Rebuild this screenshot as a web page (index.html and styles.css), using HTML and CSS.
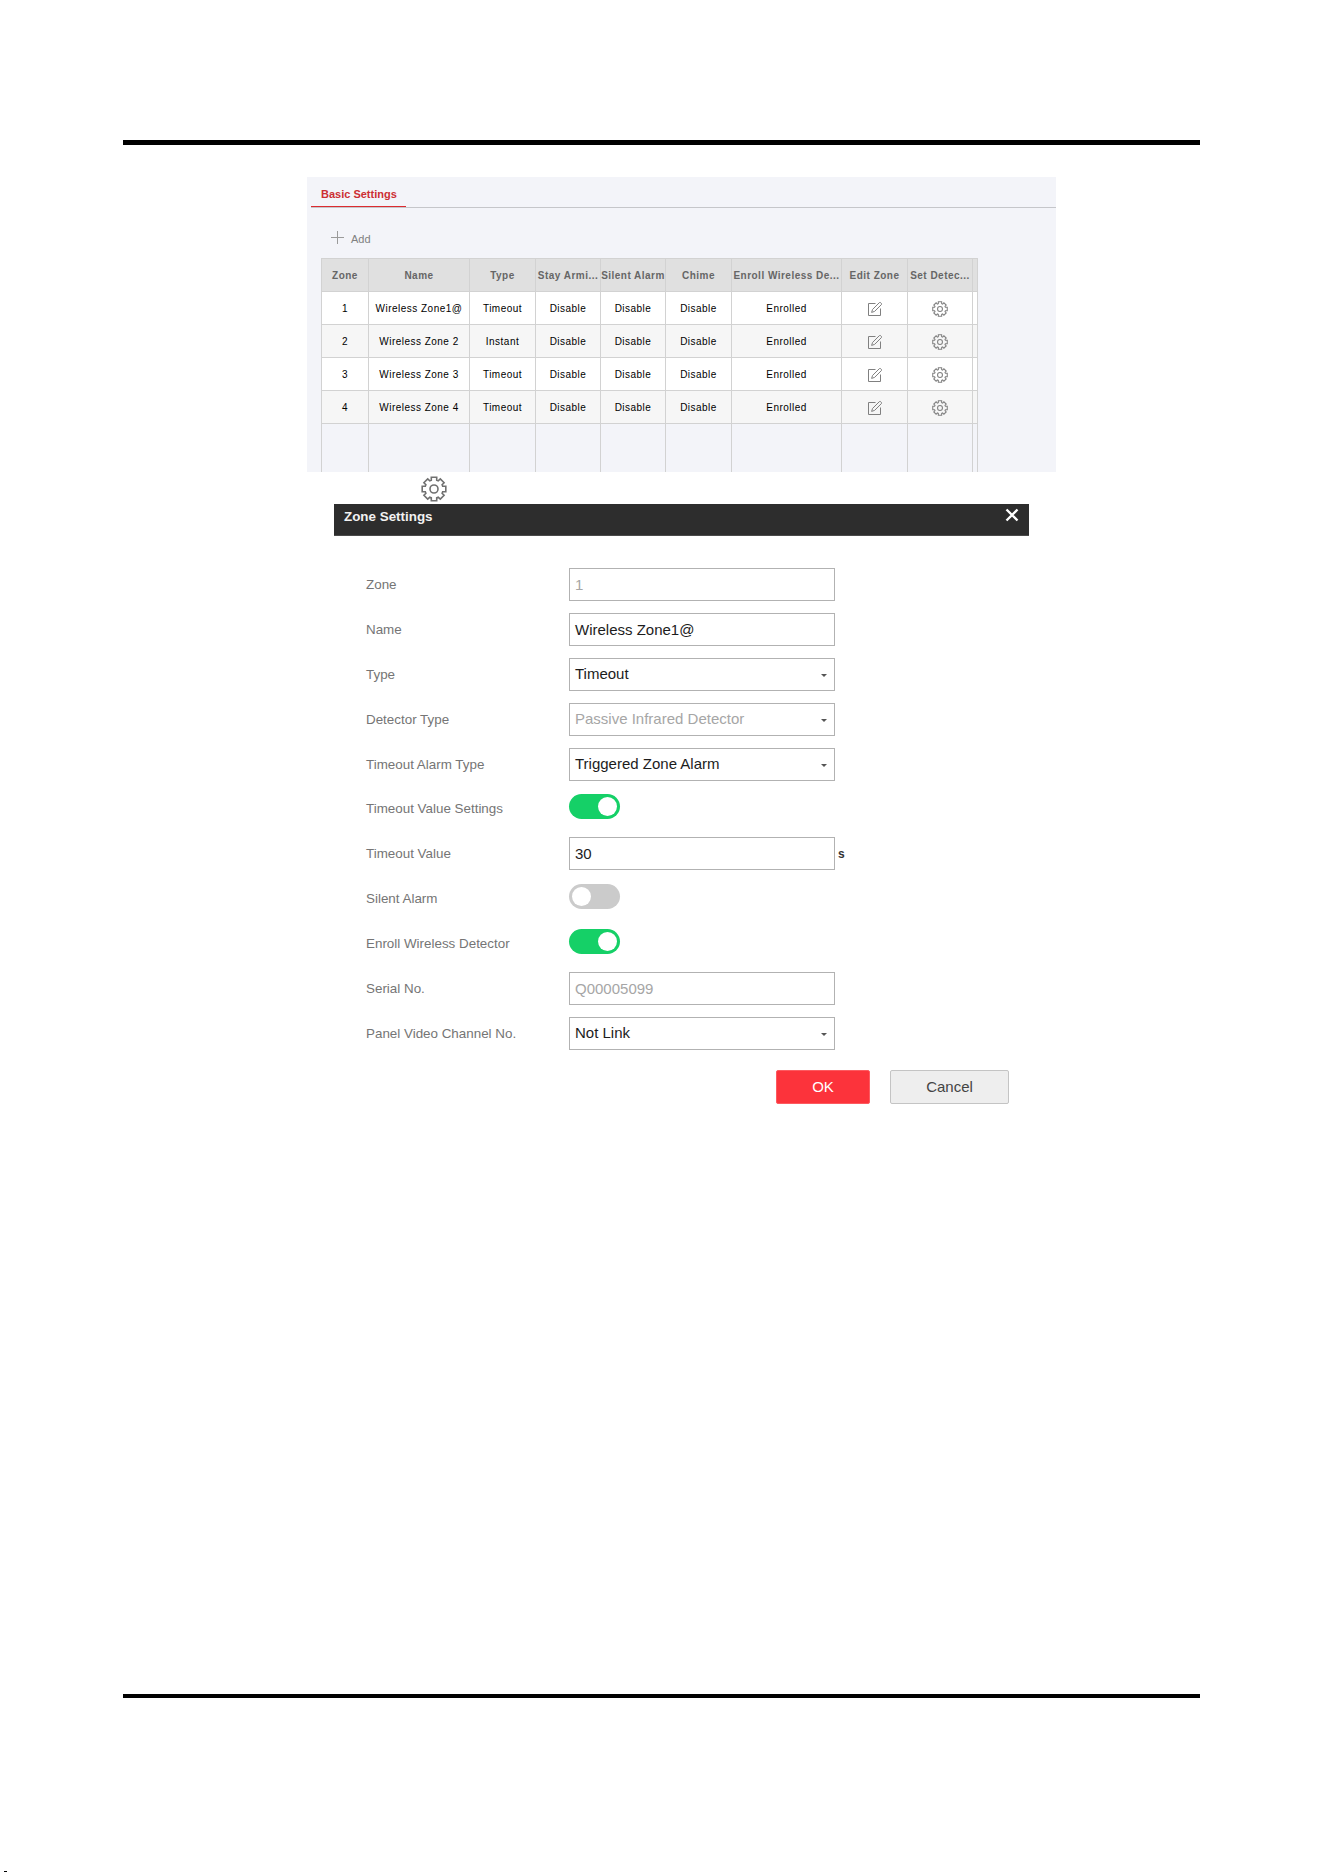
FILE: index.html
```html
<!DOCTYPE html>
<html lang="en">
<head>
  <title>Zone Settings</title>
  <meta charset="UTF-8">
  <meta name="viewport" content="width=device-width, initial-scale=1.0">
  <link rel="stylesheet" href="styles.css">
</head>
<body>
  <svg class="sprite" aria-hidden="true">
    <symbol id="gear" viewBox="0 0 26 26">
      <path d="M10.3 4.3 V1.2 H15.7 V4.3 L17.2 4.9 L19.3 2.9 L23.1 6.7 L21.1 8.8 L21.7 10.3 H24.8 V15.7 H21.7 L21.1 17.2 L23.1 19.3 L19.3 23.1 L17.2 21.1 L15.7 21.7 V24.8 H10.3 V21.7 L8.8 21.1 L6.7 23.1 L2.9 19.3 L4.9 17.2 L4.3 15.7 H1.2 V10.3 H4.3 L4.9 8.8 L2.9 6.7 L6.7 2.9 L8.8 4.9 Z"/>
      <circle cx="13" cy="13" r="4"/>
    </symbol>
    <symbol id="edit" viewBox="0 0 16 16">
      <path d="M8.5 2.5 H1.5 V14.5 H13.5 V7.5"/>
      <path d="M4.6 11.4 L5.6 8.4 L12.4 1.6 Q13 1 13.8 1.8 L14.4 2.4 Q15 3 14.4 3.6 L7.6 10.4 Z"/>
    </symbol>
  </svg>
  <div class="page">
    <div class="panel">
      <div class="tabs">
        <div class="tab active">Basic Settings</div>
      </div>
      <div class="toolbar">
        <svg class="plus" viewBox="0 0 13 13"><path d="M6.5 0 V13 M0 6.5 H13"/></svg>
        <span>Add</span>
      </div>
      <table class="zones">
        <colgroup>
          <col class="c-zone"><col class="c-name"><col class="c-type"><col class="c-stay"><col class="c-silent"><col class="c-chime"><col class="c-enroll"><col class="c-edit"><col class="c-detector"><col class="c-end">
        </colgroup>
        <thead>
          <tr><th>Zone</th><th>Name</th><th>Type</th><th>Stay Armi...</th><th>Silent Alarm</th><th>Chime</th><th>Enroll Wireless De...</th><th>Edit Zone</th><th>Set Detec...</th><th></th></tr>
        </thead>
        <tbody>
          <tr><td>1</td><td>Wireless Zone1@</td><td>Timeout</td><td>Disable</td><td>Disable</td><td>Disable</td><td>Enrolled</td><td><svg class="icon"><use href="#edit"/></svg></td><td><svg class="icon gear-sm"><use href="#gear"/></svg></td><td></td></tr>
          <tr><td>2</td><td>Wireless Zone 2</td><td>Instant</td><td>Disable</td><td>Disable</td><td>Disable</td><td>Enrolled</td><td><svg class="icon"><use href="#edit"/></svg></td><td><svg class="icon gear-sm"><use href="#gear"/></svg></td><td></td></tr>
          <tr><td>3</td><td>Wireless Zone 3</td><td>Timeout</td><td>Disable</td><td>Disable</td><td>Disable</td><td>Enrolled</td><td><svg class="icon"><use href="#edit"/></svg></td><td><svg class="icon gear-sm"><use href="#gear"/></svg></td><td></td></tr>
          <tr><td>4</td><td>Wireless Zone 4</td><td>Timeout</td><td>Disable</td><td>Disable</td><td>Disable</td><td>Enrolled</td><td><svg class="icon"><use href="#edit"/></svg></td><td><svg class="icon gear-sm"><use href="#gear"/></svg></td><td></td></tr>
          <tr class="empty"><td></td><td></td><td></td><td></td><td></td><td></td><td></td><td></td><td></td><td></td></tr>
        </tbody>
      </table>
    </div>

    <svg class="gear-lg"><use href="#gear"/></svg>

    <div class="dialog">
      <div class="dialog-header">
        <span>Zone Settings</span>
        <svg class="close" viewBox="0 0 14 14"><path d="M1.5 1.5 L12.5 12.5 M12.5 1.5 L1.5 12.5"/></svg>
      </div>
      <div class="form">
        <div class="row"><label>Zone</label><div class="field disabled">1</div></div>
        <div class="row"><label>Name</label><div class="field">Wireless Zone1@</div></div>
        <div class="row"><label>Type</label><div class="field select">Timeout</div></div>
        <div class="row"><label>Detector Type</label><div class="field select disabled">Passive Infrared Detector</div></div>
        <div class="row"><label>Timeout Alarm Type</label><div class="field select">Triggered Zone Alarm</div></div>
        <div class="row short"><label>Timeout Value Settings</label><div class="toggle on"></div></div>
        <div class="row"><label>Timeout Value</label><div class="field">30</div><span class="unit">s</span></div>
        <div class="row"><label>Silent Alarm</label><div class="toggle"></div></div>
        <div class="row"><label>Enroll Wireless Detector</label><div class="toggle on"></div></div>
        <div class="row"><label>Serial No.</label><div class="field disabled">Q00005099</div></div>
        <div class="row"><label>Panel Video Channel No.</label><div class="field select">Not Link</div></div>
      </div>
      <div class="buttons">
        <button class="btn ok">OK</button>
        <button class="btn cancel">Cancel</button>
      </div>
    </div>
  </div>
  <div class="page-mark"></div>
</body>
</html>
```
FILE: styles.css
```css
* {
  box-sizing: border-box;
}
body {
  margin: 0;
  padding-top: 140px;
  height: 1872px;
  overflow: hidden;
  display: flex;
  flex-direction: column;
  background: #fff;
  font-family: "Liberation Sans", Arial, sans-serif;
}
.sprite {
  position: absolute;
  width: 0;
  height: 0;
}
.page {
  width: 1077px;
  height: 1558px;
  margin-left: 123px;
  padding: 32px 0 0 184px;
  border-top: 5px solid #000;
  border-bottom: 4px solid #000;
}
.page-mark {
  width: 3px;
  height: 1px;
  margin: auto 0 0 4px;
  background: #000;
}

/* zone list */
.panel {
  width: 749px;
  height: 295px;
  background: #f3f4f9;
  overflow: hidden;
}
.tabs {
  height: 31px;
  margin-left: 4px;
  border-bottom: 1px solid #c5c6ca;
  display: flex;
}
.tab {
  width: 95px;
  padding: 11px 0 0 10px;
  font-size: 11px;
  line-height: 13px;
  font-weight: bold;
  white-space: nowrap;
}
.tab.active {
  color: #cc2e33;
  border-bottom: 1px solid #dc2b30;
}
.toolbar {
  height: 50px;
  padding: 23px 0 0 24px;
  display: flex;
  align-items: flex-start;
  gap: 7px;
  font-size: 11px;
  line-height: 17px;
  color: #808080;
}
.plus {
  width: 13px;
  height: 13px;
  stroke: #9a9a9a;
}
.zones {
  width: 657px;
  margin-left: 14px;
  table-layout: fixed;
  border-collapse: separate;
  border-spacing: 0;
  border-left: 1px solid #d2d2d2;
  border-top: 1px solid #d2d2d2;
}
.c-zone { width: 47px; }
.c-name { width: 101px; }
.c-type { width: 66px; }
.c-stay, .c-silent { width: 65px; }
.c-chime { width: 66px; }
.c-enroll { width: 110px; }
.c-edit { width: 66px; }
.c-detector { width: 65px; }
.c-end { width: 5px; }
.zones th, .zones td {
  height: 33px;
  padding: 2px 0 0;
  border-right: 1px solid #d2d2d2;
  border-bottom: 1px solid #d2d2d2;
  font-size: 10px;
  line-height: 12px;
  letter-spacing: 0.48px;
  text-align: center;
  white-space: nowrap;
  color: #000;
  background: #fff;
}
.zones th {
  padding-top: 1px;
  background: #e0e0e0;
  color: #666;
}
.zones tr:nth-child(even) td {
  background: #f6f6f6;
}
.zones .empty td {
  height: 60px;
  background: transparent;
}
.icon {
  display: block;
  width: 16px;
  height: 16px;
  margin: -1px auto 0;
  fill: none;
  stroke: #808080;
  stroke-width: 1;
}
.gear-sm {
  stroke-width: 1.7;
}
.gear-lg {
  display: block;
  width: 26px;
  height: 26px;
  margin: 4px 0 2px 114px;
  fill: none;
  stroke: #707070;
  stroke-width: 1.6;
}

/* settings dialog */
.dialog {
  width: 695px;
  margin-left: 27px;
}
.dialog-header {
  height: 32px;
  padding: 5px 10px 0 10px;
  display: flex;
  justify-content: space-between;
  background: #2d2d2d;
  border-bottom: 1px solid #4a4a4a;
  color: #f2f2f2;
  font-size: 13.4px;
  line-height: 15px;
  font-weight: bold;
}
.close {
  width: 14px;
  height: 14px;
  margin-top: -1px;
  stroke: #fff;
  stroke-width: 2.4;
}
.form {
  padding: 32px 0 0 31px;
}
.row {
  display: flex;
  height: 45px;
}
.row.short {
  height: 44px;
}
.row label {
  width: 204px;
  padding-left: 1px;
  font-size: 13.4px;
  line-height: 33px;
  color: #757575;
}
.field {
  position: relative;
  width: 266px;
  height: 33px;
  padding-left: 5px;
  border: 1px solid #b2b2b2;
  font-size: 15px;
  line-height: 31px;
  color: #1c1c1c;
}
.field.disabled {
  color: #a6a6a6;
}
.select {
  line-height: 30px;
}
.select::after {
  content: "";
  position: absolute;
  right: 7px;
  top: 15px;
  border: 3px solid transparent;
  border-top-color: #555;
  border-bottom: 0;
}
.unit {
  margin-left: 3px;
  font-size: 12px;
  line-height: 34px;
  font-weight: bold;
  color: #333;
}
.toggle {
  width: 51px;
  height: 25px;
  margin-top: 2px;
  padding: 3px;
  border-radius: 13px;
  background: #cbcbcb;
}
.row.short label {
  line-height: 32px;
}
.short .toggle {
  margin-top: 1px;
}
.toggle::before {
  content: "";
  display: block;
  width: 19px;
  height: 19px;
  border-radius: 50%;
  background: #fff;
}
.toggle.on {
  background: #15d067;
}
.toggle.on::before {
  margin-left: 26px;
}
.buttons {
  display: flex;
  justify-content: flex-end;
  gap: 20px;
  padding: 8px 20px 0 0;
}
.btn {
  height: 34px;
  padding: 0 0 2px;
  border-radius: 2px;
  font-family: inherit;
  font-size: 15px;
}
.ok {
  width: 94px;
  border: 1px solid #fd5a60;
  background: #fc333b;
  color: #fff;
}
.cancel {
  width: 119px;
  border: 1px solid #c4c4c4;
  background: #eee;
  color: #444;
}
```
